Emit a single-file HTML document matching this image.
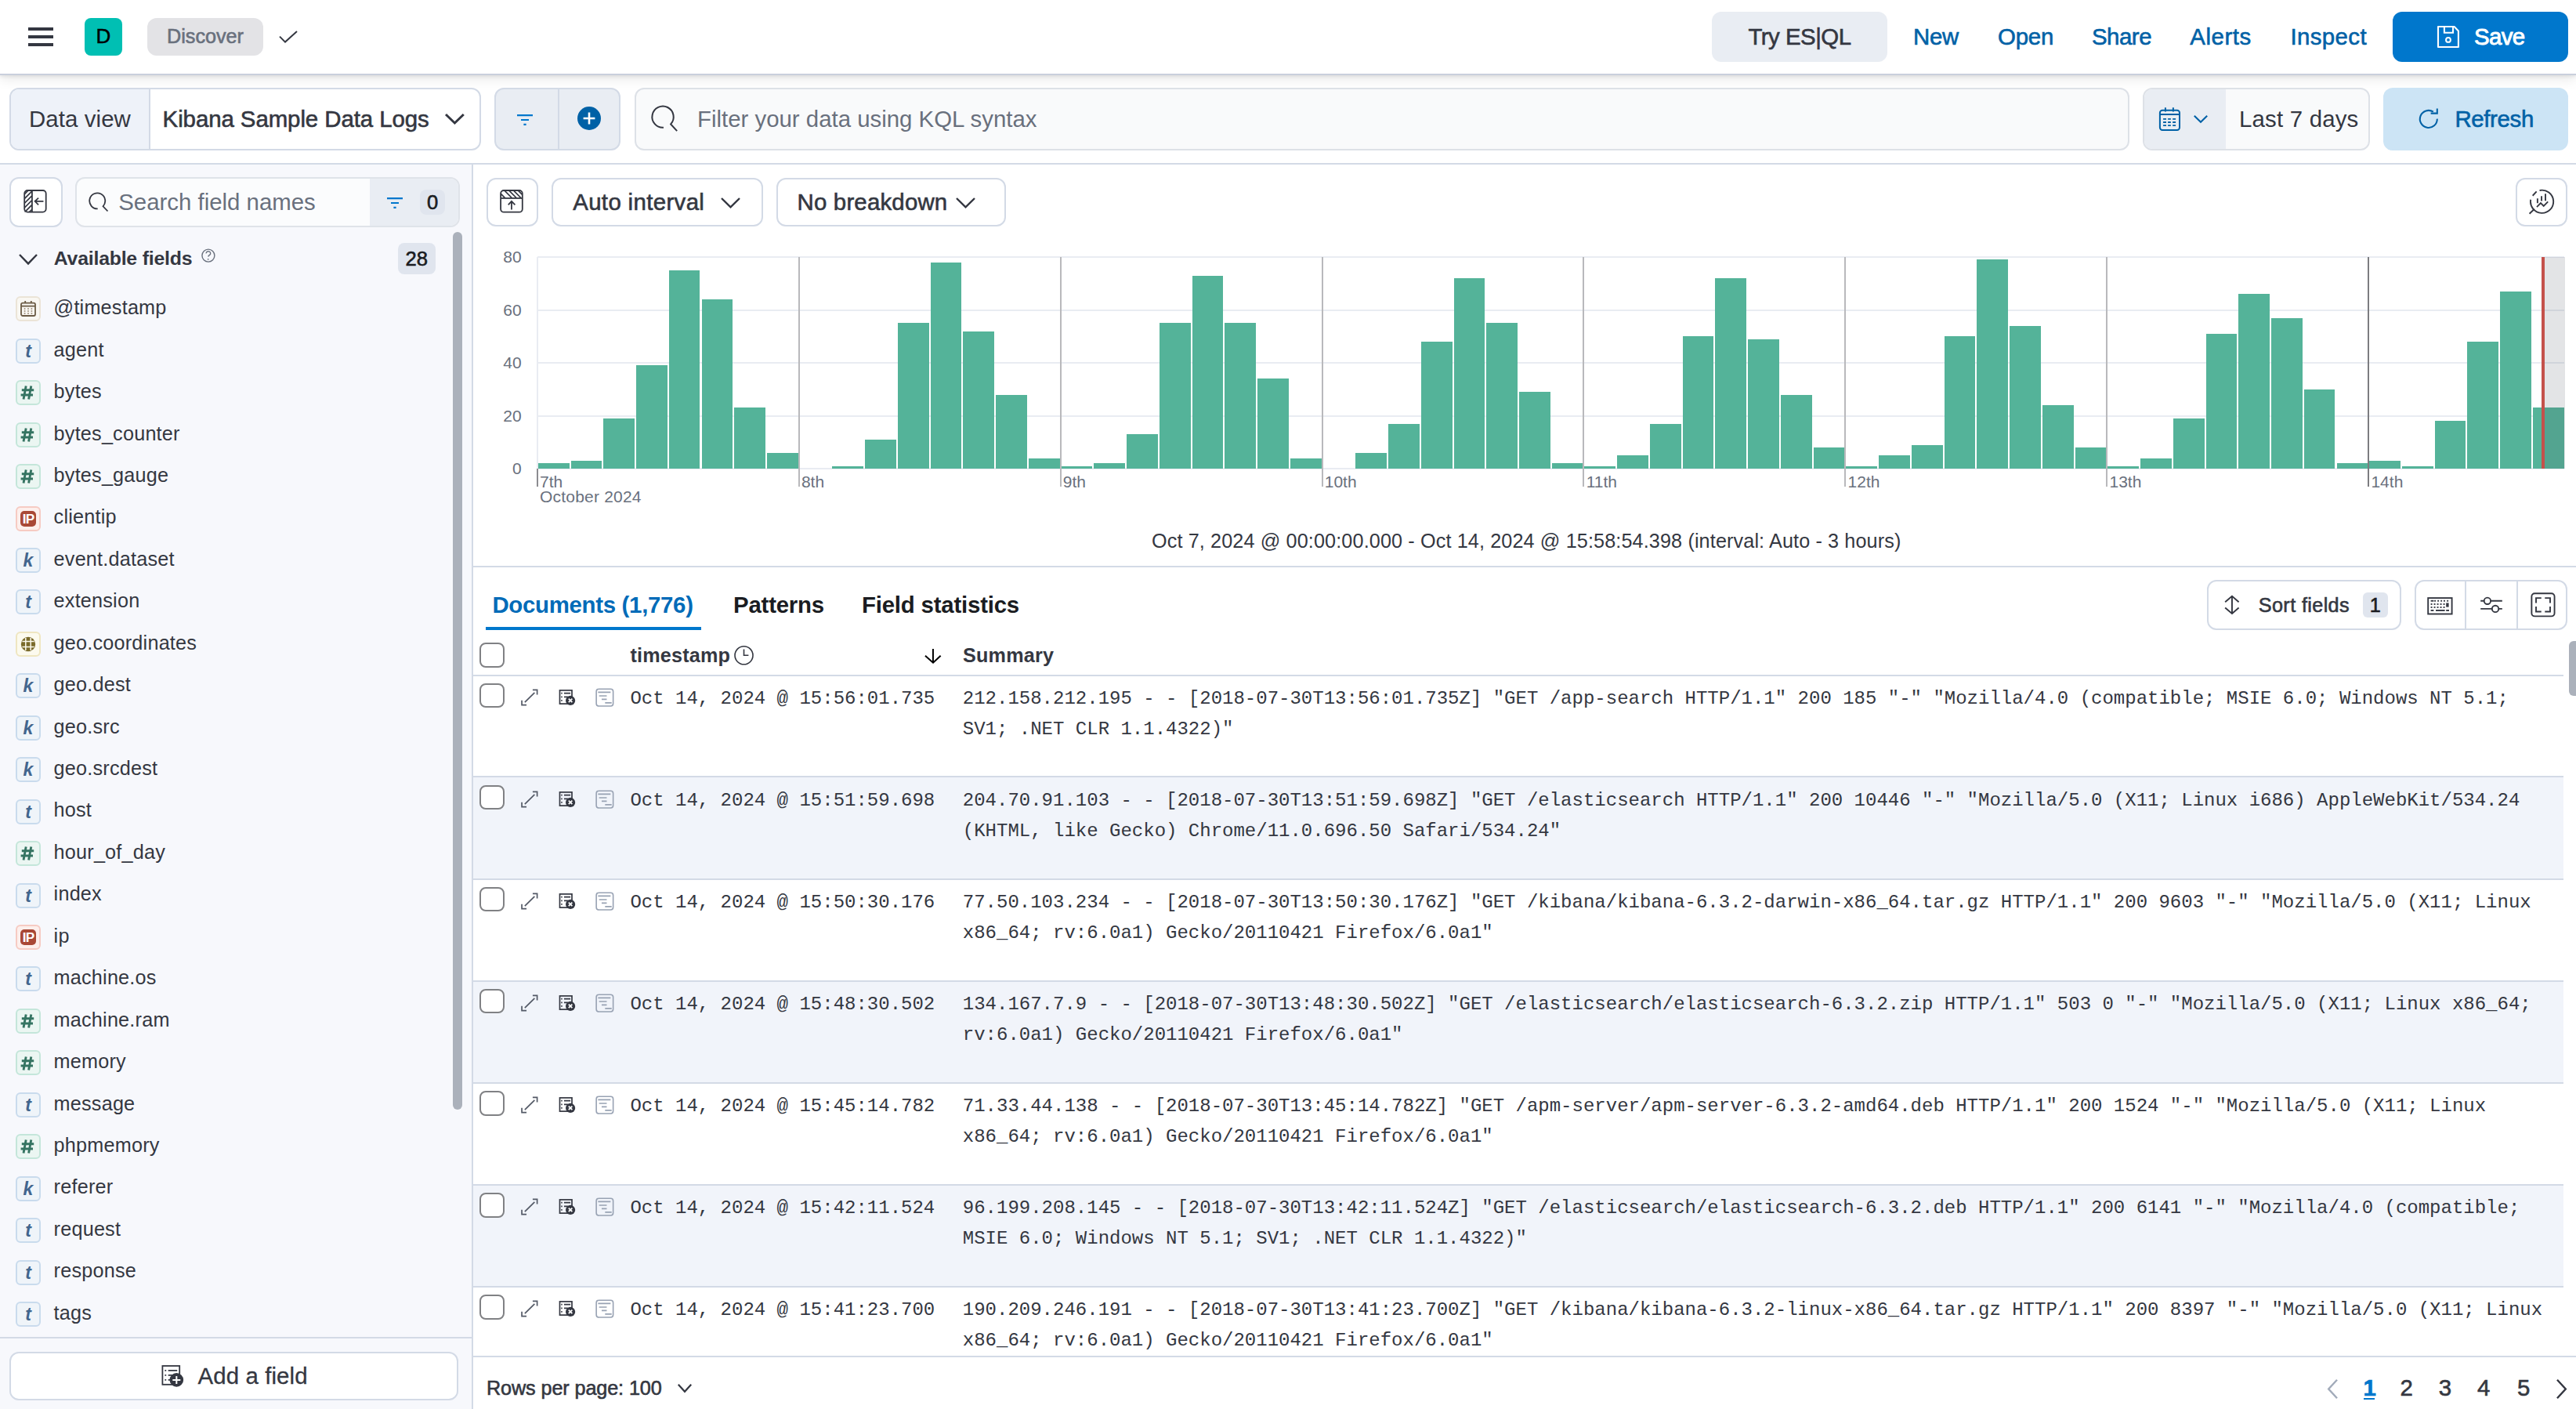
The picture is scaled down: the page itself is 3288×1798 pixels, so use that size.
<!DOCTYPE html>
<html><head><meta charset="utf-8"><title>Discover - Kibana</title>
<style>
html,body{margin:0;padding:0;}
body{zoom:2;width:1644px;height:899px;overflow:hidden;position:relative;background:#fff;
font-family:"Liberation Sans",sans-serif;color:#343741;}
.a{position:absolute;}
.t{position:absolute;white-space:pre;line-height:20px;}
.box{position:absolute;box-sizing:border-box;border:1px solid #d3dae6;border-radius:6px;}
.mono{font-family:"Liberation Mono",monospace;font-size:12px;white-space:pre;position:absolute;line-height:19.6px;color:#343741;}
svg{position:absolute;overflow:visible;}
.med{-webkit-text-stroke:0.3px currentColor;}
.tok{position:absolute;box-sizing:border-box;width:16px;height:16px;border-radius:3px;border:1px solid;}
</style></head>
<body>
<div class="a" style="left:0;top:0;width:1644px;height:47px;background:#fff;border-bottom:1px solid #c9cfdc;box-shadow:0 1px 2px rgba(0,0,0,.07),0 2px 8px rgba(0,0,0,.1);z-index:2"></div><div class="a" style="left:0;top:0;z-index:3"><div class="a" style="left:18px;top:17.55px;width:16px;height:1.8px;background:#343741"></div><div class="a" style="left:18px;top:22.6px;width:16px;height:1.8px;background:#343741"></div><div class="a" style="left:18px;top:27.6px;width:16px;height:1.8px;background:#343741"></div><div class="a" style="left:54px;top:11.5px;width:24px;height:24px;border-radius:4px;background:#00bfb3"></div><div class="t" style="left:54px;width:24px;text-align:center;top:13.2px;font-size:13px;font-weight:normal;color:#000;-webkit-text-stroke:0.25px #000">D</div><div class="a" style="left:94px;top:11.5px;width:74px;height:24px;border-radius:6px;background:#e3e3e6"></div><div class="t med" style="left:94px;width:74px;text-align:center;top:13.0px;font-size:12.6px;color:#69707d;letter-spacing:0px">Discover</div><svg style="left:178px;top:19.5px" width="12" height="8" viewBox="0 0 12 8"><path d="M0.5 3.8 L4 7.3 L11.5 0.5" fill="none" stroke="#343741" stroke-width="1"/></svg><div class="a" style="left:1092.5px;top:7.5px;width:112px;height:32px;border-radius:6px;background:#e9edf3"></div><div class="t med" style="left:1092.5px;width:112px;text-align:center;top:13.5px;font-size:14.7px;color:#343741;letter-spacing:-0.25px">Try ES|QL</div><div class="t med" style="left:1221px;top:13.5px;font-size:14.7px;color:#0061a6;letter-spacing:-0.13px">New</div><div class="t med" style="left:1275px;top:13.5px;font-size:14.7px;color:#0061a6;letter-spacing:-0.11px">Open</div><div class="t med" style="left:1335px;top:13.5px;font-size:14.7px;color:#0061a6;letter-spacing:-0.24px">Share</div><div class="t med" style="left:1397.6px;top:13.5px;font-size:14.7px;color:#0061a6;letter-spacing:0.3px">Alerts</div><div class="t med" style="left:1461.7px;top:13.5px;font-size:14.7px;color:#0061a6;letter-spacing:0.2px">Inspect</div><div class="a" style="left:1527px;top:7.5px;width:112px;height:32px;border-radius:6px;background:#0077cc"></div><svg style="left:1555.5px;top:15.5px" width="15" height="16" viewBox="0 0 15 16"><path d="M0.5 1.5 H10.8 L13.45 4.2 V14.5 H0.5 Z" fill="none" stroke="#fff" stroke-width="1.05" stroke-linejoin="round"/><path d="M4.45 1.5 V5.4 H10.0 V1.5" fill="none" stroke="#fff" stroke-width="1.05"/><circle cx="6.98" cy="9.98" r="1.45" fill="none" stroke="#fff" stroke-width="1"/></svg><div class="t med" style="left:1579px;top:13.5px;font-size:14.7px;color:#fff;letter-spacing:-0.3px;-webkit-text-stroke:0.45px #fff">Save</div></div><div class="a" style="left:0;top:48px;width:1644px;height:56px;background:#fff;border-bottom:1px solid #d3dae6"></div><div class="a" style="left:0;top:0;z-index:3"><div class="box" style="left:6px;top:56px;width:301px;height:40px;background:#fff"></div><div class="a" style="left:7px;top:57px;width:88px;height:38px;background:#eef2f9;border-radius:5px 0 0 5px;border-right:1px solid #d3dae6"></div><div class="t" style="left:18.5px;top:66.00px;font-size:14.7px;color:#343741;font-weight:normal;letter-spacing:0.05px">Data view</div><div class="t med" style="left:103.8px;top:66.00px;font-size:14.7px;color:#343741;font-weight:normal;letter-spacing:-0.03px">Kibana Sample Data Logs</div><svg style="left:284.2px;top:72.6px" width="12.4" height="6.6" viewBox="0 0 12.4 6.6"><path d="M0.5 0.5 L6.2 6 L11.9 0.5" fill="none" stroke="#343741" stroke-width="1.5"/></svg><div class="box" style="left:315.6px;top:56px;width:80.6px;height:40px;background:#e9edf3"></div><div class="a" style="left:356px;top:57px;width:1px;height:38px;background:#d3dae6"></div><svg style="left:330px;top:73px" width="10" height="7" viewBox="0 0 10 7"><path d="M0 0.6 H10 M2.5 3.5 H7.5 M4.2 6.4 H5.8" stroke="#0077cc" stroke-width="1.1"/></svg><svg style="left:368.5px;top:68.2px" width="15" height="15" viewBox="0 0 15 15"><circle cx="7.5" cy="7.5" r="7.5" fill="#0061a6"/><path d="M7.5 3.8 V11.2 M3.8 7.5 H11.2" stroke="#fff" stroke-width="1.3"/></svg><div class="box" style="left:404.75px;top:56px;width:954px;height:40px;background:#f9fafb;border-color:#dde1e7"></div><svg style="left:416px;top:68px" width="17" height="17" viewBox="0 0 17 17"><path d="M7.47 13.41 A6.83 6.83 0 1 1 12.08 11.19 L16.07 15.54" fill="none" stroke="#343741" stroke-width="1"/></svg><div class="t" style="left:445px;top:66.00px;font-size:14.7px;color:#69707d;font-weight:normal;">Filter your data using KQL syntax</div><div class="box" style="left:1367.6px;top:56px;width:145px;height:40px;background:#f9fafb;border-color:#dde1e7"></div><div class="a" style="left:1368.6px;top:57px;width:52.1px;height:38px;background:#e9edf3;border-radius:5px 0 0 5px"></div><svg style="left:1377px;top:68px" width="16" height="16" viewBox="0 0 16 16"><rect x="1.45" y="2.4" width="12.55" height="12.55" rx="1.6" fill="none" stroke="#0061a6" stroke-width="1"/><path d="M1.45 4.94 H14 M4.96 0.6 V3.3 M9.93 0.6 V3.3" stroke="#0061a6" stroke-width="1"/><path d="M3.54 7.95 h1.95 M6.56 7.95 h1.86 M9.58 7.95 h1.95 M3.54 10 h1.95 M6.56 10 h1.86 M9.58 10 h1.95 M3.54 12.04 h1.95 M6.56 12.04 h1.86 M9.58 12.04 h1.95" stroke="#0061a6" stroke-width="0.95"/></svg><svg style="left:1400px;top:73.5px" width="9" height="5" viewBox="0 0 9 5"><path d="M0.4 0.4 L4.5 4.4 L8.6 0.4" fill="none" stroke="#0061a6" stroke-width="1.05"/></svg><div class="t" style="left:1429px;top:66.00px;font-size:14.7px;color:#343741;font-weight:normal;letter-spacing:0.1px">Last 7 days</div><div class="a" style="left:1521px;top:56px;width:118px;height:40px;border-radius:6px;background:#cce4f5"></div><svg style="left:1544px;top:69px" width="13" height="14" viewBox="0 0 13 14"><path d="M8.92 2.37 A5.5 5.5 0 1 0 11.4 6.8" fill="none" stroke="#0061a6" stroke-width="1.05"/><path d="M11.4 0.24 V3.32 H7.32" fill="none" stroke="#0061a6" stroke-width="1.05"/></svg><div class="t med" style="left:1566.7px;top:66.00px;font-size:14.7px;color:#0061a6;font-weight:normal;letter-spacing:-0.17px">Refresh</div></div><div class="a" style="left:0;top:105px;width:301px;height:794px;background:#f7f8fc;border-right:1px solid #d3dae6"></div><div class="box" style="left:6.2px;top:113px;width:33.8px;height:32px;background:#fff"></div><svg style="left:15px;top:121px" width="16" height="16" viewBox="0 0 16 16"><defs><clipPath id="cpL"><rect x="0.6" y="0.5" width="4.9" height="13.8"/></clipPath></defs><rect x="0.6" y="0.5" width="13.75" height="13.8" rx="2" fill="none" stroke="#343741" stroke-width="0.9"/><path d="M5.47 0.5 V14.3" stroke="#343741" stroke-width="0.9"/><g clip-path="url(#cpL)" stroke="#343741" stroke-width="0.85"><path d="M-1 4.5 L5.5 -2 M-1 7.4 L5.5 0.9 M-1 10.3 L5.5 3.8 M-1 13.2 L5.5 6.7 M-1 16.1 L5.5 9.6 M-1 19 L5.5 12.5"/></g><path d="M7.24 7.42 H12.74 M9.55 5.29 L7.3 7.42 L9.55 9.64" fill="none" stroke="#343741" stroke-width="0.9"/></svg><div class="box" style="left:48px;top:113px;width:245.5px;height:32px;background:#fbfcfd;border-color:#dfe3e9"></div><div class="a" style="left:236px;top:114px;width:56.5px;height:30px;background:#e9edf3;border-radius:0 5px 5px 0"></div><svg style="left:57px;top:123px" width="13" height="13" viewBox="0 0 13 13"><path d="M5.35 10.19 A5.0 5.0 0 1 1 8.76 8.63 L11.74 11.75" fill="none" stroke="#343741" stroke-width="0.9"/></svg><div class="t" style="left:75.6px;top:119.20px;font-size:14.7px;color:#69707d;font-weight:normal;">Search field names</div><svg style="left:247px;top:126px" width="10" height="7" viewBox="0 0 10 7"><path d="M0 0.6 H10 M2.5 3.5 H7.5 M4.2 6.4 H5.8" stroke="#0077cc" stroke-width="1.1"/></svg><div class="a" style="left:268px;top:121px;width:16px;height:16px;border-radius:4px;background:#e0e5ee"></div><div class="t med" style="left:268px;top:119.00px;font-size:12.8px;color:#1a1c21;font-weight:normal;width:16px;text-align:center">0</div><svg style="left:12px;top:162px" width="12" height="7" viewBox="0 0 12 7"><path d="M0.5 0.5 L6 6.2 L11.5 0.5" fill="none" stroke="#343741" stroke-width="1.2"/></svg><div class="t" style="left:34.4px;top:155.20px;font-size:12.4px;color:#343741;font-weight:bold;letter-spacing:-0.1px">Available fields</div><svg style="left:128.5px;top:158.4px" width="9" height="9" viewBox="0 0 9 9"><circle cx="4.45" cy="4.55" r="4.0" fill="none" stroke="#69707d" stroke-width="0.7"/><path d="M3.08 3.18 A1.38 1.3 0 1 1 5.4 4.1 Q4.6 4.6 4.33 5.3" fill="none" stroke="#69707d" stroke-width="0.7"/><circle cx="4.33" cy="6.91" r="0.45" fill="#69707d"/></svg><div class="a" style="left:254px;top:155px;width:23.75px;height:19.75px;border-radius:4px;background:#e0e5ee"></div><div class="t med" style="left:254px;top:155.00px;font-size:12.8px;color:#1a1c21;font-weight:normal;width:23.75px;text-align:center">28</div><div class="tok" style="left:10px;top:189.20px;background:#f9f7f2;border-color:#ebe4d7"></div><svg style="left:13.1px;top:191.80px" width="10" height="10" viewBox="0 0 10 10"><rect x="0.5" y="1.3" width="9" height="8.2" rx="1" fill="none" stroke="#6b5b45" stroke-width="0.9"/><path d="M0.5 3.3 H9.5 M3.1 0 V1.4 M6.9 0 V1.4" stroke="#6b5b45" stroke-width="0.9"/><path d="M2.4 5 h0.8 M4.6 5 h0.8 M6.8 5 h0.8 M2.4 6.5 h0.8 M4.6 6.5 h0.8 M6.8 6.5 h0.8 M2.4 8 h0.8 M4.6 8 h0.8 M6.8 8 h0.8" stroke="#8b7b65" stroke-width="0.8"/></svg><div class="t" style="left:34.3px;top:186.10px;font-size:12.6px;color:#343741;font-weight:normal;letter-spacing:0.11px">@timestamp</div><div class="tok" style="left:10px;top:215.92px;background:#eff4f9;border-color:#c9dbed"></div><div class="t" style="left:10px;top:213.92px;width:16px;text-align:center;font-size:11.5px;font-weight:bold;font-style:italic;color:#42658d">t</div><div class="t" style="left:34.3px;top:212.82px;font-size:12.6px;color:#343741;font-weight:normal;letter-spacing:0.11px">agent</div><div class="tok" style="left:10px;top:242.64px;background:#ebf6f2;border-color:#c4e6da"></div><svg style="left:13.2px;top:246.24px" width="9" height="9" viewBox="0 0 9 9"><path d="M3.6 0.3 L2.0 8.7 M6.9 0.3 L5.3 8.7 M0.9 2.9 H8.6 M0.3 6.0 H8.0" stroke="#357462" stroke-width="1.45"/></svg><div class="t" style="left:34.3px;top:239.54px;font-size:12.6px;color:#343741;font-weight:normal;letter-spacing:0.11px">bytes</div><div class="tok" style="left:10px;top:269.36px;background:#ebf6f2;border-color:#c4e6da"></div><svg style="left:13.2px;top:272.96px" width="9" height="9" viewBox="0 0 9 9"><path d="M3.6 0.3 L2.0 8.7 M6.9 0.3 L5.3 8.7 M0.9 2.9 H8.6 M0.3 6.0 H8.0" stroke="#357462" stroke-width="1.45"/></svg><div class="t" style="left:34.3px;top:266.26px;font-size:12.6px;color:#343741;font-weight:normal;letter-spacing:0.11px">bytes_counter</div><div class="tok" style="left:10px;top:296.08px;background:#ebf6f2;border-color:#c4e6da"></div><svg style="left:13.2px;top:299.68px" width="9" height="9" viewBox="0 0 9 9"><path d="M3.6 0.3 L2.0 8.7 M6.9 0.3 L5.3 8.7 M0.9 2.9 H8.6 M0.3 6.0 H8.0" stroke="#357462" stroke-width="1.45"/></svg><div class="t" style="left:34.3px;top:292.98px;font-size:12.6px;color:#343741;font-weight:normal;letter-spacing:0.11px">bytes_gauge</div><div class="tok" style="left:10px;top:322.80px;background:#fdefec;border-color:#f6cbc3"></div><div class="a" style="left:13.1px;top:325.80px;width:10px;height:10px;border-radius:2.5px;background:#a94836"></div><div class="t" style="left:13.1px;top:320.80px;width:10px;text-align:center;font-size:8.6px;font-weight:bold;color:#fff;letter-spacing:-0.3px">IP</div><div class="t" style="left:34.3px;top:319.70px;font-size:12.6px;color:#343741;font-weight:normal;letter-spacing:0.11px">clientip</div><div class="tok" style="left:10px;top:349.52px;background:#eff4f9;border-color:#c9dbed"></div><div class="t" style="left:10px;top:347.52px;width:16px;text-align:center;font-size:11.5px;font-weight:bold;font-style:italic;color:#42658d">k</div><div class="t" style="left:34.3px;top:346.42px;font-size:12.6px;color:#343741;font-weight:normal;letter-spacing:0.11px">event.dataset</div><div class="tok" style="left:10px;top:376.24px;background:#eff4f9;border-color:#c9dbed"></div><div class="t" style="left:10px;top:374.24px;width:16px;text-align:center;font-size:11.5px;font-weight:bold;font-style:italic;color:#42658d">t</div><div class="t" style="left:34.3px;top:373.14px;font-size:12.6px;color:#343741;font-weight:normal;letter-spacing:0.11px">extension</div><div class="tok" style="left:10px;top:402.96px;background:#fcfaee;border-color:#efe6c1"></div><svg style="left:13.1px;top:405.86px" width="10" height="10" viewBox="0 0 10 10"><circle cx="5" cy="5" r="4.6" fill="#7a6a2b"/><path d="M1.2 3.2 H8.8 M1.2 6.8 H8.8 M3.4 1 V9 M6.6 1 V9" stroke="#fcfaee" stroke-width="0.75"/></svg><div class="t" style="left:34.3px;top:399.86px;font-size:12.6px;color:#343741;font-weight:normal;letter-spacing:0.11px">geo.coordinates</div><div class="tok" style="left:10px;top:429.68px;background:#eff4f9;border-color:#c9dbed"></div><div class="t" style="left:10px;top:427.68px;width:16px;text-align:center;font-size:11.5px;font-weight:bold;font-style:italic;color:#42658d">k</div><div class="t" style="left:34.3px;top:426.58px;font-size:12.6px;color:#343741;font-weight:normal;letter-spacing:0.11px">geo.dest</div><div class="tok" style="left:10px;top:456.40px;background:#eff4f9;border-color:#c9dbed"></div><div class="t" style="left:10px;top:454.40px;width:16px;text-align:center;font-size:11.5px;font-weight:bold;font-style:italic;color:#42658d">k</div><div class="t" style="left:34.3px;top:453.30px;font-size:12.6px;color:#343741;font-weight:normal;letter-spacing:0.11px">geo.src</div><div class="tok" style="left:10px;top:483.12px;background:#eff4f9;border-color:#c9dbed"></div><div class="t" style="left:10px;top:481.12px;width:16px;text-align:center;font-size:11.5px;font-weight:bold;font-style:italic;color:#42658d">k</div><div class="t" style="left:34.3px;top:480.02px;font-size:12.6px;color:#343741;font-weight:normal;letter-spacing:0.11px">geo.srcdest</div><div class="tok" style="left:10px;top:509.84px;background:#eff4f9;border-color:#c9dbed"></div><div class="t" style="left:10px;top:507.84px;width:16px;text-align:center;font-size:11.5px;font-weight:bold;font-style:italic;color:#42658d">t</div><div class="t" style="left:34.3px;top:506.74px;font-size:12.6px;color:#343741;font-weight:normal;letter-spacing:0.11px">host</div><div class="tok" style="left:10px;top:536.56px;background:#ebf6f2;border-color:#c4e6da"></div><svg style="left:13.2px;top:540.16px" width="9" height="9" viewBox="0 0 9 9"><path d="M3.6 0.3 L2.0 8.7 M6.9 0.3 L5.3 8.7 M0.9 2.9 H8.6 M0.3 6.0 H8.0" stroke="#357462" stroke-width="1.45"/></svg><div class="t" style="left:34.3px;top:533.46px;font-size:12.6px;color:#343741;font-weight:normal;letter-spacing:0.11px">hour_of_day</div><div class="tok" style="left:10px;top:563.28px;background:#eff4f9;border-color:#c9dbed"></div><div class="t" style="left:10px;top:561.28px;width:16px;text-align:center;font-size:11.5px;font-weight:bold;font-style:italic;color:#42658d">t</div><div class="t" style="left:34.3px;top:560.18px;font-size:12.6px;color:#343741;font-weight:normal;letter-spacing:0.11px">index</div><div class="tok" style="left:10px;top:590.00px;background:#fdefec;border-color:#f6cbc3"></div><div class="a" style="left:13.1px;top:593.00px;width:10px;height:10px;border-radius:2.5px;background:#a94836"></div><div class="t" style="left:13.1px;top:588.00px;width:10px;text-align:center;font-size:8.6px;font-weight:bold;color:#fff;letter-spacing:-0.3px">IP</div><div class="t" style="left:34.3px;top:586.90px;font-size:12.6px;color:#343741;font-weight:normal;letter-spacing:0.11px">ip</div><div class="tok" style="left:10px;top:616.72px;background:#eff4f9;border-color:#c9dbed"></div><div class="t" style="left:10px;top:614.72px;width:16px;text-align:center;font-size:11.5px;font-weight:bold;font-style:italic;color:#42658d">t</div><div class="t" style="left:34.3px;top:613.62px;font-size:12.6px;color:#343741;font-weight:normal;letter-spacing:0.11px">machine.os</div><div class="tok" style="left:10px;top:643.44px;background:#ebf6f2;border-color:#c4e6da"></div><svg style="left:13.2px;top:647.04px" width="9" height="9" viewBox="0 0 9 9"><path d="M3.6 0.3 L2.0 8.7 M6.9 0.3 L5.3 8.7 M0.9 2.9 H8.6 M0.3 6.0 H8.0" stroke="#357462" stroke-width="1.45"/></svg><div class="t" style="left:34.3px;top:640.34px;font-size:12.6px;color:#343741;font-weight:normal;letter-spacing:0.11px">machine.ram</div><div class="tok" style="left:10px;top:670.16px;background:#ebf6f2;border-color:#c4e6da"></div><svg style="left:13.2px;top:673.76px" width="9" height="9" viewBox="0 0 9 9"><path d="M3.6 0.3 L2.0 8.7 M6.9 0.3 L5.3 8.7 M0.9 2.9 H8.6 M0.3 6.0 H8.0" stroke="#357462" stroke-width="1.45"/></svg><div class="t" style="left:34.3px;top:667.06px;font-size:12.6px;color:#343741;font-weight:normal;letter-spacing:0.11px">memory</div><div class="tok" style="left:10px;top:696.88px;background:#eff4f9;border-color:#c9dbed"></div><div class="t" style="left:10px;top:694.88px;width:16px;text-align:center;font-size:11.5px;font-weight:bold;font-style:italic;color:#42658d">t</div><div class="t" style="left:34.3px;top:693.78px;font-size:12.6px;color:#343741;font-weight:normal;letter-spacing:0.11px">message</div><div class="tok" style="left:10px;top:723.60px;background:#ebf6f2;border-color:#c4e6da"></div><svg style="left:13.2px;top:727.20px" width="9" height="9" viewBox="0 0 9 9"><path d="M3.6 0.3 L2.0 8.7 M6.9 0.3 L5.3 8.7 M0.9 2.9 H8.6 M0.3 6.0 H8.0" stroke="#357462" stroke-width="1.45"/></svg><div class="t" style="left:34.3px;top:720.50px;font-size:12.6px;color:#343741;font-weight:normal;letter-spacing:0.11px">phpmemory</div><div class="tok" style="left:10px;top:750.32px;background:#eff4f9;border-color:#c9dbed"></div><div class="t" style="left:10px;top:748.32px;width:16px;text-align:center;font-size:11.5px;font-weight:bold;font-style:italic;color:#42658d">k</div><div class="t" style="left:34.3px;top:747.22px;font-size:12.6px;color:#343741;font-weight:normal;letter-spacing:0.11px">referer</div><div class="tok" style="left:10px;top:777.04px;background:#eff4f9;border-color:#c9dbed"></div><div class="t" style="left:10px;top:775.04px;width:16px;text-align:center;font-size:11.5px;font-weight:bold;font-style:italic;color:#42658d">t</div><div class="t" style="left:34.3px;top:773.94px;font-size:12.6px;color:#343741;font-weight:normal;letter-spacing:0.11px">request</div><div class="tok" style="left:10px;top:803.76px;background:#eff4f9;border-color:#c9dbed"></div><div class="t" style="left:10px;top:801.76px;width:16px;text-align:center;font-size:11.5px;font-weight:bold;font-style:italic;color:#42658d">t</div><div class="t" style="left:34.3px;top:800.66px;font-size:12.6px;color:#343741;font-weight:normal;letter-spacing:0.11px">response</div><div class="tok" style="left:10px;top:830.48px;background:#eff4f9;border-color:#c9dbed"></div><div class="t" style="left:10px;top:828.48px;width:16px;text-align:center;font-size:11.5px;font-weight:bold;font-style:italic;color:#42658d">t</div><div class="t" style="left:34.3px;top:827.38px;font-size:12.6px;color:#343741;font-weight:normal;letter-spacing:0.11px">tags</div><div class="a" style="left:289px;top:148px;width:6px;height:560px;border-radius:3px;background:#abb1bb"></div><div class="a" style="left:0;top:853px;width:301px;height:1px;background:#d3dae6"></div><div class="box" style="left:6.2px;top:862.5px;width:286.5px;height:31px;background:#fff"></div><svg style="left:102.8px;top:870.5px" width="16" height="16" viewBox="0 0 16 16"><rect x="0.7" y="1.0" width="10.9" height="11.9" fill="none" stroke="#343741" stroke-width="0.9"/><path d="M2.2 3.9 h0.9 M4.34 3.9 H10.1 M2.2 6.92 h0.9 M4.34 6.92 H8 M2.2 9.94 h0.9 M4.34 9.94 H6" stroke="#343741" stroke-width="0.9"/><circle cx="9.66" cy="9.94" r="4.4" fill="#343741"/><path d="M9.66 7.44 V12.44 M7.16 9.94 H12.16" stroke="#fff" stroke-width="1"/></svg><div class="t" style="left:126.3px;top:868.00px;font-size:14.7px;color:#343741;font-weight:normal;letter-spacing:0.05px;-webkit-text-stroke:0.15px currentColor">Add a field</div><div class="box" style="left:310.4px;top:113.3px;width:33px;height:31.4px;background:#fff"></div><svg style="left:319px;top:121px" width="16" height="16" viewBox="0 0 16 16"><defs><clipPath id="cpT"><rect x="0.5" y="0.5" width="14" height="5"/></clipPath></defs><rect x="0.55" y="0.5" width="13.85" height="13.85" rx="2" fill="none" stroke="#343741" stroke-width="0.9"/><path d="M0.55 5.47 H14.4" stroke="#343741" stroke-width="0.9"/><g clip-path="url(#cpT)" stroke="#343741" stroke-width="0.85"><path d="M0.2 2.2 L3.5 5.5 M2.4 0 L7.9 5.5 M5.3 0 L10.8 5.5 M8.2 0 L13.7 5.5 M11.1 0 L16.6 5.5"/></g><path d="M7.48 12.74 V7.5 M5.36 9.64 L7.48 7.4 L9.7 9.64" fill="none" stroke="#343741" stroke-width="0.9"/></svg><div class="box" style="left:352px;top:113.3px;width:135px;height:31.4px;background:#fff"></div><div class="t med" style="left:365.6px;top:119.20px;font-size:14.7px;color:#343741;font-weight:normal;letter-spacing:0.18px">Auto interval</div><svg style="left:460px;top:126px" width="12.5" height="7" viewBox="0 0 12.5 7"><path d="M0.5 0.5 L6.25 6.2 L12 0.5" fill="none" stroke="#343741" stroke-width="1.2"/></svg><div class="box" style="left:495.6px;top:113.3px;width:146.3px;height:31.4px;background:#fff"></div><div class="t med" style="left:508.75px;top:119.20px;font-size:14.7px;color:#343741;font-weight:normal;letter-spacing:0.1px">No breakdown</div><svg style="left:610px;top:126px" width="12.5" height="7" viewBox="0 0 12.5 7"><path d="M0.5 0.5 L6.25 6.2 L12 0.5" fill="none" stroke="#343741" stroke-width="1.2"/></svg><div class="box" style="left:1605.5px;top:113.3px;width:33.2px;height:31.4px;background:#fff"></div><svg style="left:1613.5px;top:121px" width="16" height="16" viewBox="0 0 16 16"><g fill="none" stroke="#343741" stroke-width="0.95"><path d="M7.27 0.5 A7.3 7.3 0 1 1 1.6 6.36"/><path d="M2.84 3.87 L5.32 1.21"/><path d="M3.9 12.39 L0.8 15.4"/><path d="M5.94 5.65 V8.66 M8.52 4.14 V7.24 M11.0 2.63 V7.07"/><path d="M5.5 11.06 L7.98 8.57 L9.85 10.44 L12.6 7.69"/></g></svg><div class="a" style="left:342.9px;top:298.50px;width:1293.85px;height:1px;background:#e9ecf2"></div><div class="t" style="left:300px;width:32.8px;text-align:right;top:289.00px;font-size:10.5px;color:#69707d">0</div><div class="a" style="left:342.9px;top:264.75px;width:1293.85px;height:1px;background:#e9ecf2"></div><div class="t" style="left:300px;width:32.8px;text-align:right;top:255.25px;font-size:10.5px;color:#69707d">20</div><div class="a" style="left:342.9px;top:231.00px;width:1293.85px;height:1px;background:#e9ecf2"></div><div class="t" style="left:300px;width:32.8px;text-align:right;top:221.50px;font-size:10.5px;color:#69707d">40</div><div class="a" style="left:342.9px;top:197.25px;width:1293.85px;height:1px;background:#e9ecf2"></div><div class="t" style="left:300px;width:32.8px;text-align:right;top:187.75px;font-size:10.5px;color:#69707d">60</div><div class="a" style="left:342.9px;top:163.50px;width:1293.85px;height:1px;background:#e9ecf2"></div><div class="t" style="left:300px;width:32.8px;text-align:right;top:154.00px;font-size:10.5px;color:#69707d">80</div><div class="a" style="left:342.4px;top:164.0px;width:1px;height:135.0px;background:#e9ecf2"></div><div class="a" style="left:343.40px;top:295.62px;width:19.87px;height:3.38px;background:#54b399"></div><div class="a" style="left:364.27px;top:293.94px;width:19.87px;height:5.06px;background:#54b399"></div><div class="a" style="left:385.14px;top:266.94px;width:19.87px;height:32.06px;background:#54b399"></div><div class="a" style="left:406.01px;top:233.19px;width:19.87px;height:65.81px;background:#54b399"></div><div class="a" style="left:426.88px;top:172.44px;width:19.87px;height:126.56px;background:#54b399"></div><div class="a" style="left:447.75px;top:191.00px;width:19.87px;height:108.00px;background:#54b399"></div><div class="a" style="left:468.62px;top:260.19px;width:19.87px;height:38.81px;background:#54b399"></div><div class="a" style="left:489.49px;top:288.88px;width:19.87px;height:10.12px;background:#54b399"></div><div class="a" style="left:531.23px;top:297.31px;width:19.87px;height:1.69px;background:#54b399"></div><div class="a" style="left:552.10px;top:280.44px;width:19.87px;height:18.56px;background:#54b399"></div><div class="a" style="left:572.97px;top:206.19px;width:19.87px;height:92.81px;background:#54b399"></div><div class="a" style="left:593.84px;top:167.38px;width:19.87px;height:131.62px;background:#54b399"></div><div class="a" style="left:614.71px;top:211.25px;width:19.87px;height:87.75px;background:#54b399"></div><div class="a" style="left:635.58px;top:251.75px;width:19.87px;height:47.25px;background:#54b399"></div><div class="a" style="left:656.45px;top:292.25px;width:19.87px;height:6.75px;background:#54b399"></div><div class="a" style="left:677.32px;top:297.31px;width:19.87px;height:1.69px;background:#54b399"></div><div class="a" style="left:698.19px;top:295.62px;width:19.87px;height:3.38px;background:#54b399"></div><div class="a" style="left:719.06px;top:277.06px;width:19.87px;height:21.94px;background:#54b399"></div><div class="a" style="left:739.93px;top:206.19px;width:19.87px;height:92.81px;background:#54b399"></div><div class="a" style="left:760.80px;top:175.81px;width:19.87px;height:123.19px;background:#54b399"></div><div class="a" style="left:781.67px;top:206.19px;width:19.87px;height:92.81px;background:#54b399"></div><div class="a" style="left:802.54px;top:241.62px;width:19.87px;height:57.38px;background:#54b399"></div><div class="a" style="left:823.41px;top:292.25px;width:19.87px;height:6.75px;background:#54b399"></div><div class="a" style="left:865.15px;top:288.88px;width:19.87px;height:10.12px;background:#54b399"></div><div class="a" style="left:886.02px;top:270.31px;width:19.87px;height:28.69px;background:#54b399"></div><div class="a" style="left:906.89px;top:218.00px;width:19.87px;height:81.00px;background:#54b399"></div><div class="a" style="left:927.76px;top:177.50px;width:19.87px;height:121.50px;background:#54b399"></div><div class="a" style="left:948.63px;top:206.19px;width:19.87px;height:92.81px;background:#54b399"></div><div class="a" style="left:969.50px;top:250.06px;width:19.87px;height:48.94px;background:#54b399"></div><div class="a" style="left:990.37px;top:295.62px;width:19.87px;height:3.38px;background:#54b399"></div><div class="a" style="left:1011.24px;top:297.31px;width:19.87px;height:1.69px;background:#54b399"></div><div class="a" style="left:1032.11px;top:290.56px;width:19.87px;height:8.44px;background:#54b399"></div><div class="a" style="left:1052.98px;top:270.31px;width:19.87px;height:28.69px;background:#54b399"></div><div class="a" style="left:1073.85px;top:214.62px;width:19.87px;height:84.38px;background:#54b399"></div><div class="a" style="left:1094.72px;top:177.50px;width:19.87px;height:121.50px;background:#54b399"></div><div class="a" style="left:1115.59px;top:216.31px;width:19.87px;height:82.69px;background:#54b399"></div><div class="a" style="left:1136.46px;top:251.75px;width:19.87px;height:47.25px;background:#54b399"></div><div class="a" style="left:1157.33px;top:285.50px;width:19.87px;height:13.50px;background:#54b399"></div><div class="a" style="left:1178.20px;top:297.31px;width:19.87px;height:1.69px;background:#54b399"></div><div class="a" style="left:1199.07px;top:290.56px;width:19.87px;height:8.44px;background:#54b399"></div><div class="a" style="left:1219.94px;top:283.81px;width:19.87px;height:15.19px;background:#54b399"></div><div class="a" style="left:1240.81px;top:214.62px;width:19.87px;height:84.38px;background:#54b399"></div><div class="a" style="left:1261.68px;top:165.69px;width:19.87px;height:133.31px;background:#54b399"></div><div class="a" style="left:1282.55px;top:207.88px;width:19.87px;height:91.12px;background:#54b399"></div><div class="a" style="left:1303.42px;top:258.50px;width:19.87px;height:40.50px;background:#54b399"></div><div class="a" style="left:1324.29px;top:285.50px;width:19.87px;height:13.50px;background:#54b399"></div><div class="a" style="left:1345.16px;top:297.31px;width:19.87px;height:1.69px;background:#54b399"></div><div class="a" style="left:1366.03px;top:292.25px;width:19.87px;height:6.75px;background:#54b399"></div><div class="a" style="left:1386.90px;top:266.94px;width:19.87px;height:32.06px;background:#54b399"></div><div class="a" style="left:1407.77px;top:212.94px;width:19.87px;height:86.06px;background:#54b399"></div><div class="a" style="left:1428.64px;top:187.62px;width:19.87px;height:111.38px;background:#54b399"></div><div class="a" style="left:1449.51px;top:202.81px;width:19.87px;height:96.19px;background:#54b399"></div><div class="a" style="left:1470.38px;top:248.38px;width:19.87px;height:50.62px;background:#54b399"></div><div class="a" style="left:1491.25px;top:295.62px;width:19.87px;height:3.38px;background:#54b399"></div><div class="a" style="left:1512.12px;top:293.94px;width:19.87px;height:5.06px;background:#54b399"></div><div class="a" style="left:1532.99px;top:297.31px;width:19.87px;height:1.69px;background:#54b399"></div><div class="a" style="left:1553.86px;top:268.62px;width:19.87px;height:30.38px;background:#54b399"></div><div class="a" style="left:1574.73px;top:218.00px;width:19.87px;height:81.00px;background:#54b399"></div><div class="a" style="left:1595.60px;top:185.94px;width:19.87px;height:113.06px;background:#54b399"></div><div class="a" style="left:1616.47px;top:260.19px;width:19.87px;height:38.81px;background:#54b399"></div><div class="a" style="left:342.40px;top:299.0px;width:1px;height:11.5px;background:#8c8c90"></div><div class="t" style="left:344.50px;top:297.60px;font-size:10.5px;color:#69707d">7th</div><div class="a" style="left:509.36px;top:164.0px;width:1px;height:146.60px;background:#b9b9bc"></div><div class="t" style="left:511.46px;top:297.60px;font-size:10.5px;color:#69707d">8th</div><div class="a" style="left:676.32px;top:164.0px;width:1px;height:146.60px;background:#b9b9bc"></div><div class="t" style="left:678.42px;top:297.60px;font-size:10.5px;color:#69707d">9th</div><div class="a" style="left:843.28px;top:164.0px;width:1px;height:146.60px;background:#b9b9bc"></div><div class="t" style="left:845.38px;top:297.60px;font-size:10.5px;color:#69707d">10th</div><div class="a" style="left:1010.24px;top:164.0px;width:1px;height:146.60px;background:#b9b9bc"></div><div class="t" style="left:1012.34px;top:297.60px;font-size:10.5px;color:#69707d">11th</div><div class="a" style="left:1177.20px;top:164.0px;width:1px;height:146.60px;background:#b9b9bc"></div><div class="t" style="left:1179.30px;top:297.60px;font-size:10.5px;color:#69707d">12th</div><div class="a" style="left:1344.16px;top:164.0px;width:1px;height:146.60px;background:#b9b9bc"></div><div class="t" style="left:1346.26px;top:297.60px;font-size:10.5px;color:#69707d">13th</div><div class="a" style="left:1511.12px;top:164.0px;width:1px;height:146.60px;background:#7c7c80"></div><div class="t" style="left:1513.22px;top:297.60px;font-size:10.5px;color:#69707d">14th</div><div class="t" style="left:344.50px;top:307.20px;font-size:10.5px;color:#69707d;letter-spacing:0.1px">October 2024</div><div class="a" style="left:1624px;top:164.0px;width:12.75px;height:135.0px;background:rgba(80,85,100,0.16)"></div><div class="a" style="left:1622px;top:164.0px;width:2px;height:135.0px;background:#c4514b"></div><div class="t" style="left:735px;top:334.8px;font-size:12.6px;color:#343741;letter-spacing:0.064px">Oct 7, 2024 @ 00:00:00.000 - Oct 14, 2024 @ 15:58:54.398 (interval: Auto - 3 hours)</div><div class="a" style="left:302px;top:361px;width:1342px;height:1px;background:#d3dae6"></div><div class="t" style="left:314.2px;top:376.20px;font-size:14.7px;color:#006bb8;font-weight:bold;letter-spacing:-0.15px">Documents (1,776)</div><div class="t" style="left:468px;top:376.20px;font-size:14.7px;color:#1a1c21;font-weight:bold;letter-spacing:-0.1px">Patterns</div><div class="t" style="left:550px;top:376.20px;font-size:14.7px;color:#1a1c21;font-weight:bold;letter-spacing:-0.1px">Field statistics</div><div class="a" style="left:310px;top:400.2px;width:137.3px;height:2px;background:#0077cc"></div><div class="box" style="left:1408.3px;top:370.2px;width:124.3px;height:31.8px;background:#fff"></div><svg style="left:1419px;top:379px" width="11" height="14" viewBox="0 0 11 14"><path d="M5.48 1.38 V12.49 M1.08 5.11 L5.48 1.38 L9.79 5.11 M1.08 8.75 L5.48 12.49 L9.79 8.75" fill="none" stroke="#343741" stroke-width="0.95"/></svg><div class="t med" style="left:1441.4px;top:376.20px;font-size:12.6px;color:#343741;font-weight:normal;letter-spacing:0.19px">Sort fields</div><div class="a" style="left:1508px;top:378px;width:15.8px;height:16px;border-radius:3px;background:#e0e5ee"></div><div class="t med" style="left:1508px;top:376.20px;font-size:12.6px;color:#1a1c21;font-weight:normal;width:15.8px;text-align:center">1</div><div class="box" style="left:1541px;top:370.2px;width:97.7px;height:31.8px;background:#fff"></div><div class="a" style="left:1573px;top:371px;width:1px;height:30px;background:#d3dae6"></div><div class="a" style="left:1606px;top:371px;width:1px;height:30px;background:#d3dae6"></div><svg style="left:1549px;top:381px" width="16" height="11" viewBox="0 0 16 11"><rect x="0.6" y="0.55" width="15.2" height="10.2" fill="none" stroke="#343741" stroke-width="0.95"/><g fill="#343741"><rect x="2.3" y="1.9" width="1.9" height="0.95"/><rect x="4.6" y="1.9" width="0.95" height="0.95"/><rect x="6.6" y="1.9" width="0.95" height="0.95"/><rect x="8.6" y="1.9" width="0.95" height="0.95"/><rect x="10.5" y="1.9" width="0.95" height="0.95"/><rect x="12.6" y="1.9" width="0.95" height="0.95"/><rect x="2.3" y="4" width="0.95" height="0.95"/><rect x="4.3" y="4" width="0.95" height="0.95"/><rect x="6.3" y="4" width="0.95" height="0.95"/><rect x="8.3" y="4" width="0.95" height="0.95"/><rect x="10.3" y="4" width="0.95" height="0.95"/><rect x="12.1" y="3.7" width="1.7" height="2.6"/><rect x="2.3" y="6" width="0.95" height="0.95"/><rect x="4.3" y="6" width="0.95" height="0.95"/><rect x="6.3" y="6" width="0.95" height="0.95"/><rect x="8.3" y="6" width="0.95" height="0.95"/><rect x="10.3" y="6" width="0.95" height="0.95"/><rect x="2.3" y="8" width="1.9" height="0.95"/><rect x="5.5" y="8" width="5.8" height="0.95"/><rect x="12.1" y="8" width="1.9" height="0.95"/></g></svg><svg style="left:1583px;top:380px" width="14" height="11" viewBox="0 0 14 11"><path d="M0.1 3.39 H2.35 M6.55 3.39 H13.9 M0.1 8.45 H7.42 M11.62 8.45 H13.9" stroke="#343741" stroke-width="0.95"/><circle cx="4.45" cy="3.39" r="2.1" fill="none" stroke="#343741" stroke-width="0.95"/><circle cx="9.52" cy="8.45" r="2.1" fill="none" stroke="#343741" stroke-width="0.95"/></svg><svg style="left:1615px;top:378px" width="16" height="16" viewBox="0 0 16 16"><rect x="0.68" y="0.6" width="14.6" height="14.6" rx="2" fill="none" stroke="#343741" stroke-width="0.95"/><path d="M3.5 6.78 V3.58 H6.87 M9.14 3.58 H12.5 V6.78 M12.5 9.05 V12.25 H9.14 M6.87 12.25 H3.5 V9.05" fill="none" stroke="#343741" stroke-width="0.95"/></svg><div class="a" style="left:1639.5px;top:409px;width:4.5px;height:35px;border-radius:3px 0 0 3px;background:#abb1bb"></div><div class="a" style="left:306.2px;top:410.2px;width:15.6px;height:15.6px;box-sizing:border-box;border:1px solid #808184;border-radius:4px;background:#fff"></div><div class="t" style="left:402.2px;top:407.80px;font-size:12.6px;color:#343741;font-weight:bold;letter-spacing:0.1px">timestamp</div><svg style="left:468.7px;top:411.3px" width="13" height="13" viewBox="0 0 13 13"><circle cx="6.26" cy="6.66" r="5.75" fill="none" stroke="#343741" stroke-width="0.8"/><path d="M6.26 2.7 V6.66 H9.2" fill="none" stroke="#343741" stroke-width="0.8"/></svg><svg style="left:590px;top:412.5px" width="11" height="11" viewBox="0 0 11 11"><path d="M5.47 1.5 V10.31 M0.49 5.84 L5.5 10.38 L10.33 5.84" fill="none" stroke="#000" stroke-width="1"/></svg><div class="t" style="left:614.5px;top:407.80px;font-size:12.6px;color:#343741;font-weight:bold;letter-spacing:0.1px">Summary</div><div class="a" style="left:302px;top:430.4px;width:1334px;height:1px;background:#d3dae6"></div><div class="a" style="left:0;top:0;width:1644px;height:865px;overflow:hidden"><div class="a" style="left:302px;top:495.24px;width:1334px;height:1px;background:#d3dae6"></div><div class="a" style="left:302px;top:496.24px;width:1334px;height:64.04px;background:#f1f4fa"></div><div class="a" style="left:302px;top:560.28px;width:1334px;height:1px;background:#d3dae6"></div><div class="a" style="left:302px;top:625.32px;width:1334px;height:1px;background:#d3dae6"></div><div class="a" style="left:302px;top:626.32px;width:1334px;height:64.04px;background:#f1f4fa"></div><div class="a" style="left:302px;top:690.36px;width:1334px;height:1px;background:#d3dae6"></div><div class="a" style="left:302px;top:755.40px;width:1334px;height:1px;background:#d3dae6"></div><div class="a" style="left:302px;top:756.40px;width:1334px;height:64.04px;background:#f1f4fa"></div><div class="a" style="left:302px;top:820.44px;width:1334px;height:1px;background:#d3dae6"></div><div class="a" style="left:302px;top:885.48px;width:1334px;height:1px;background:#d3dae6"></div><div class="a" style="left:306.2px;top:436.0px;width:15.6px;height:15.6px;box-sizing:border-box;border:1px solid #808184;border-radius:4px;background:#fff"></div><svg style="left:332.5px;top:439.40px" width="11" height="11" viewBox="0 0 11 11"><path d="M2.43 8.56 L8.68 2.44 M7.46 0.68 H10.31 V3.8 M0.53 7.33 V10.32 H3.52" fill="none" stroke="#535966" stroke-width="0.85"/></svg><svg style="left:356.6px;top:439.40px" width="12" height="12" viewBox="0 0 12 12"><rect x="0.75" y="0.95" width="7.75" height="8.6" fill="none" stroke="#343741" stroke-width="0.85"/><path d="M1.6 2.85 h0.75 M3.47 2.85 h4.07 M1.6 5.16 h0.75 M3.47 5.16 h2.5 M1.6 7.47 h0.75" stroke="#343741" stroke-width="0.85"/><circle cx="7.54" cy="7.47" r="3.05" fill="#343741"/><path d="M6.4 6.33 L8.68 8.61 M8.68 6.33 L6.4 8.61" stroke="#fff" stroke-width="0.9"/></svg><svg style="left:380px;top:438.90px" width="12" height="12" viewBox="0 0 12 12"><rect x="0.57" y="0.63" width="10.75" height="10.88" rx="1.6" fill="none" stroke="#98a2b3" stroke-width="0.8"/><path d="M1.67 2.67 H9.68 M2.35 4.98 H7.24 M3.98 7.21 H7.24 M6.15 9.46 H10.36" stroke="#98a2b3" stroke-width="0.8"/></svg><div class="mono" style="left:402.2px;top:435.90px">Oct 14, 2024 @ 15:56:01.735</div><div class="mono" style="left:614.4px;top:435.90px">212.158.212.195 - - [2018-07-30T13:56:01.735Z] &quot;GET /app-search HTTP/1.1&quot; 200 185 &quot;-&quot; &quot;Mozilla/4.0 (compatible; MSIE 6.0; Windows NT 5.1;<br>SV1; .NET CLR 1.1.4322)&quot;</div><div class="a" style="left:306.2px;top:501.04px;width:15.6px;height:15.6px;box-sizing:border-box;border:1px solid #808184;border-radius:4px;background:#fff"></div><svg style="left:332.5px;top:504.44px" width="11" height="11" viewBox="0 0 11 11"><path d="M2.43 8.56 L8.68 2.44 M7.46 0.68 H10.31 V3.8 M0.53 7.33 V10.32 H3.52" fill="none" stroke="#535966" stroke-width="0.85"/></svg><svg style="left:356.6px;top:504.44px" width="12" height="12" viewBox="0 0 12 12"><rect x="0.75" y="0.95" width="7.75" height="8.6" fill="none" stroke="#343741" stroke-width="0.85"/><path d="M1.6 2.85 h0.75 M3.47 2.85 h4.07 M1.6 5.16 h0.75 M3.47 5.16 h2.5 M1.6 7.47 h0.75" stroke="#343741" stroke-width="0.85"/><circle cx="7.54" cy="7.47" r="3.05" fill="#343741"/><path d="M6.4 6.33 L8.68 8.61 M8.68 6.33 L6.4 8.61" stroke="#fff" stroke-width="0.9"/></svg><svg style="left:380px;top:503.94px" width="12" height="12" viewBox="0 0 12 12"><rect x="0.57" y="0.63" width="10.75" height="10.88" rx="1.6" fill="none" stroke="#98a2b3" stroke-width="0.8"/><path d="M1.67 2.67 H9.68 M2.35 4.98 H7.24 M3.98 7.21 H7.24 M6.15 9.46 H10.36" stroke="#98a2b3" stroke-width="0.8"/></svg><div class="mono" style="left:402.2px;top:500.94px">Oct 14, 2024 @ 15:51:59.698</div><div class="mono" style="left:614.4px;top:500.94px">204.70.91.103 - - [2018-07-30T13:51:59.698Z] &quot;GET /elasticsearch HTTP/1.1&quot; 200 10446 &quot;-&quot; &quot;Mozilla/5.0 (X11; Linux i686) AppleWebKit/534.24<br>(KHTML, like Gecko) Chrome/11.0.696.50 Safari/534.24&quot;</div><div class="a" style="left:306.2px;top:566.0799999999999px;width:15.6px;height:15.6px;box-sizing:border-box;border:1px solid #808184;border-radius:4px;background:#fff"></div><svg style="left:332.5px;top:569.48px" width="11" height="11" viewBox="0 0 11 11"><path d="M2.43 8.56 L8.68 2.44 M7.46 0.68 H10.31 V3.8 M0.53 7.33 V10.32 H3.52" fill="none" stroke="#535966" stroke-width="0.85"/></svg><svg style="left:356.6px;top:569.48px" width="12" height="12" viewBox="0 0 12 12"><rect x="0.75" y="0.95" width="7.75" height="8.6" fill="none" stroke="#343741" stroke-width="0.85"/><path d="M1.6 2.85 h0.75 M3.47 2.85 h4.07 M1.6 5.16 h0.75 M3.47 5.16 h2.5 M1.6 7.47 h0.75" stroke="#343741" stroke-width="0.85"/><circle cx="7.54" cy="7.47" r="3.05" fill="#343741"/><path d="M6.4 6.33 L8.68 8.61 M8.68 6.33 L6.4 8.61" stroke="#fff" stroke-width="0.9"/></svg><svg style="left:380px;top:568.98px" width="12" height="12" viewBox="0 0 12 12"><rect x="0.57" y="0.63" width="10.75" height="10.88" rx="1.6" fill="none" stroke="#98a2b3" stroke-width="0.8"/><path d="M1.67 2.67 H9.68 M2.35 4.98 H7.24 M3.98 7.21 H7.24 M6.15 9.46 H10.36" stroke="#98a2b3" stroke-width="0.8"/></svg><div class="mono" style="left:402.2px;top:565.98px">Oct 14, 2024 @ 15:50:30.176</div><div class="mono" style="left:614.4px;top:565.98px">77.50.103.234 - - [2018-07-30T13:50:30.176Z] &quot;GET /kibana/kibana-6.3.2-darwin-x86_64.tar.gz HTTP/1.1&quot; 200 9603 &quot;-&quot; &quot;Mozilla/5.0 (X11; Linux<br>x86_64; rv:6.0a1) Gecko/20110421 Firefox/6.0a1&quot;</div><div class="a" style="left:306.2px;top:631.1199999999999px;width:15.6px;height:15.6px;box-sizing:border-box;border:1px solid #808184;border-radius:4px;background:#fff"></div><svg style="left:332.5px;top:634.52px" width="11" height="11" viewBox="0 0 11 11"><path d="M2.43 8.56 L8.68 2.44 M7.46 0.68 H10.31 V3.8 M0.53 7.33 V10.32 H3.52" fill="none" stroke="#535966" stroke-width="0.85"/></svg><svg style="left:356.6px;top:634.52px" width="12" height="12" viewBox="0 0 12 12"><rect x="0.75" y="0.95" width="7.75" height="8.6" fill="none" stroke="#343741" stroke-width="0.85"/><path d="M1.6 2.85 h0.75 M3.47 2.85 h4.07 M1.6 5.16 h0.75 M3.47 5.16 h2.5 M1.6 7.47 h0.75" stroke="#343741" stroke-width="0.85"/><circle cx="7.54" cy="7.47" r="3.05" fill="#343741"/><path d="M6.4 6.33 L8.68 8.61 M8.68 6.33 L6.4 8.61" stroke="#fff" stroke-width="0.9"/></svg><svg style="left:380px;top:634.02px" width="12" height="12" viewBox="0 0 12 12"><rect x="0.57" y="0.63" width="10.75" height="10.88" rx="1.6" fill="none" stroke="#98a2b3" stroke-width="0.8"/><path d="M1.67 2.67 H9.68 M2.35 4.98 H7.24 M3.98 7.21 H7.24 M6.15 9.46 H10.36" stroke="#98a2b3" stroke-width="0.8"/></svg><div class="mono" style="left:402.2px;top:631.02px">Oct 14, 2024 @ 15:48:30.502</div><div class="mono" style="left:614.4px;top:631.02px">134.167.7.9 - - [2018-07-30T13:48:30.502Z] &quot;GET /elasticsearch/elasticsearch-6.3.2.zip HTTP/1.1&quot; 503 0 &quot;-&quot; &quot;Mozilla/5.0 (X11; Linux x86_64;<br>rv:6.0a1) Gecko/20110421 Firefox/6.0a1&quot;</div><div class="a" style="left:306.2px;top:696.16px;width:15.6px;height:15.6px;box-sizing:border-box;border:1px solid #808184;border-radius:4px;background:#fff"></div><svg style="left:332.5px;top:699.56px" width="11" height="11" viewBox="0 0 11 11"><path d="M2.43 8.56 L8.68 2.44 M7.46 0.68 H10.31 V3.8 M0.53 7.33 V10.32 H3.52" fill="none" stroke="#535966" stroke-width="0.85"/></svg><svg style="left:356.6px;top:699.56px" width="12" height="12" viewBox="0 0 12 12"><rect x="0.75" y="0.95" width="7.75" height="8.6" fill="none" stroke="#343741" stroke-width="0.85"/><path d="M1.6 2.85 h0.75 M3.47 2.85 h4.07 M1.6 5.16 h0.75 M3.47 5.16 h2.5 M1.6 7.47 h0.75" stroke="#343741" stroke-width="0.85"/><circle cx="7.54" cy="7.47" r="3.05" fill="#343741"/><path d="M6.4 6.33 L8.68 8.61 M8.68 6.33 L6.4 8.61" stroke="#fff" stroke-width="0.9"/></svg><svg style="left:380px;top:699.06px" width="12" height="12" viewBox="0 0 12 12"><rect x="0.57" y="0.63" width="10.75" height="10.88" rx="1.6" fill="none" stroke="#98a2b3" stroke-width="0.8"/><path d="M1.67 2.67 H9.68 M2.35 4.98 H7.24 M3.98 7.21 H7.24 M6.15 9.46 H10.36" stroke="#98a2b3" stroke-width="0.8"/></svg><div class="mono" style="left:402.2px;top:696.06px">Oct 14, 2024 @ 15:45:14.782</div><div class="mono" style="left:614.4px;top:696.06px">71.33.44.138 - - [2018-07-30T13:45:14.782Z] &quot;GET /apm-server/apm-server-6.3.2-amd64.deb HTTP/1.1&quot; 200 1524 &quot;-&quot; &quot;Mozilla/5.0 (X11; Linux<br>x86_64; rv:6.0a1) Gecko/20110421 Firefox/6.0a1&quot;</div><div class="a" style="left:306.2px;top:761.2px;width:15.6px;height:15.6px;box-sizing:border-box;border:1px solid #808184;border-radius:4px;background:#fff"></div><svg style="left:332.5px;top:764.60px" width="11" height="11" viewBox="0 0 11 11"><path d="M2.43 8.56 L8.68 2.44 M7.46 0.68 H10.31 V3.8 M0.53 7.33 V10.32 H3.52" fill="none" stroke="#535966" stroke-width="0.85"/></svg><svg style="left:356.6px;top:764.60px" width="12" height="12" viewBox="0 0 12 12"><rect x="0.75" y="0.95" width="7.75" height="8.6" fill="none" stroke="#343741" stroke-width="0.85"/><path d="M1.6 2.85 h0.75 M3.47 2.85 h4.07 M1.6 5.16 h0.75 M3.47 5.16 h2.5 M1.6 7.47 h0.75" stroke="#343741" stroke-width="0.85"/><circle cx="7.54" cy="7.47" r="3.05" fill="#343741"/><path d="M6.4 6.33 L8.68 8.61 M8.68 6.33 L6.4 8.61" stroke="#fff" stroke-width="0.9"/></svg><svg style="left:380px;top:764.10px" width="12" height="12" viewBox="0 0 12 12"><rect x="0.57" y="0.63" width="10.75" height="10.88" rx="1.6" fill="none" stroke="#98a2b3" stroke-width="0.8"/><path d="M1.67 2.67 H9.68 M2.35 4.98 H7.24 M3.98 7.21 H7.24 M6.15 9.46 H10.36" stroke="#98a2b3" stroke-width="0.8"/></svg><div class="mono" style="left:402.2px;top:761.10px">Oct 14, 2024 @ 15:42:11.524</div><div class="mono" style="left:614.4px;top:761.10px">96.199.208.145 - - [2018-07-30T13:42:11.524Z] &quot;GET /elasticsearch/elasticsearch-6.3.2.deb HTTP/1.1&quot; 200 6141 &quot;-&quot; &quot;Mozilla/4.0 (compatible;<br>MSIE 6.0; Windows NT 5.1; SV1; .NET CLR 1.1.4322)&quot;</div><div class="a" style="left:306.2px;top:826.24px;width:15.6px;height:15.6px;box-sizing:border-box;border:1px solid #808184;border-radius:4px;background:#fff"></div><svg style="left:332.5px;top:829.64px" width="11" height="11" viewBox="0 0 11 11"><path d="M2.43 8.56 L8.68 2.44 M7.46 0.68 H10.31 V3.8 M0.53 7.33 V10.32 H3.52" fill="none" stroke="#535966" stroke-width="0.85"/></svg><svg style="left:356.6px;top:829.64px" width="12" height="12" viewBox="0 0 12 12"><rect x="0.75" y="0.95" width="7.75" height="8.6" fill="none" stroke="#343741" stroke-width="0.85"/><path d="M1.6 2.85 h0.75 M3.47 2.85 h4.07 M1.6 5.16 h0.75 M3.47 5.16 h2.5 M1.6 7.47 h0.75" stroke="#343741" stroke-width="0.85"/><circle cx="7.54" cy="7.47" r="3.05" fill="#343741"/><path d="M6.4 6.33 L8.68 8.61 M8.68 6.33 L6.4 8.61" stroke="#fff" stroke-width="0.9"/></svg><svg style="left:380px;top:829.14px" width="12" height="12" viewBox="0 0 12 12"><rect x="0.57" y="0.63" width="10.75" height="10.88" rx="1.6" fill="none" stroke="#98a2b3" stroke-width="0.8"/><path d="M1.67 2.67 H9.68 M2.35 4.98 H7.24 M3.98 7.21 H7.24 M6.15 9.46 H10.36" stroke="#98a2b3" stroke-width="0.8"/></svg><div class="mono" style="left:402.2px;top:826.14px">Oct 14, 2024 @ 15:41:23.700</div><div class="mono" style="left:614.4px;top:826.14px">190.209.246.191 - - [2018-07-30T13:41:23.700Z] &quot;GET /kibana/kibana-6.3.2-linux-x86_64.tar.gz HTTP/1.1&quot; 200 8397 &quot;-&quot; &quot;Mozilla/5.0 (X11; Linux<br>x86_64; rv:6.0a1) Gecko/20110421 Firefox/6.0a1&quot;</div></div><div class="a" style="left:302px;top:865px;width:1342px;height:34px;background:#fff;border-top:1px solid #d3dae6"></div><div class="t med" style="left:310.5px;top:875.60px;font-size:12.6px;color:#343741;font-weight:normal;letter-spacing:-0.05px">Rows per page: 100</div><svg style="left:432.5px;top:883px" width="9" height="5.5" viewBox="0 0 9 5.5"><path d="M0.4 0.4 L4.5 4.9 L8.6 0.4" fill="none" stroke="#343741" stroke-width="1.1"/></svg><svg style="left:1485.5px;top:879.8px" width="6.5" height="12.5" viewBox="0 0 6.5 12.5"><path d="M6 0.4 L0.6 6.25 L6 12.1" fill="none" stroke="#a2abba" stroke-width="1.2"/></svg><svg style="left:1631.6px;top:879.8px" width="6.5" height="12.5" viewBox="0 0 6.5 12.5"><path d="M0.5 0.4 L5.9 6.25 L0.5 12.1" fill="none" stroke="#343741" stroke-width="1.2"/></svg><div class="t med" style="left:1506.9px;width:11px;text-align:center;top:875.7px;font-size:14.7px;color:#0077cc;font-weight:bold">1</div><div class="t med" style="left:1530.3px;width:11px;text-align:center;top:875.7px;font-size:14.7px;color:#343741;font-weight:normal">2</div><div class="t med" style="left:1555.0px;width:11px;text-align:center;top:875.7px;font-size:14.7px;color:#343741;font-weight:normal">3</div><div class="t med" style="left:1579.6px;width:11px;text-align:center;top:875.7px;font-size:14.7px;color:#343741;font-weight:normal">4</div><div class="t med" style="left:1605.1px;width:11px;text-align:center;top:875.7px;font-size:14.7px;color:#343741;font-weight:normal">5</div><div class="a" style="left:1508.6px;top:892px;width:6.8px;height:1px;background:#0077cc"></div>
</body></html>
